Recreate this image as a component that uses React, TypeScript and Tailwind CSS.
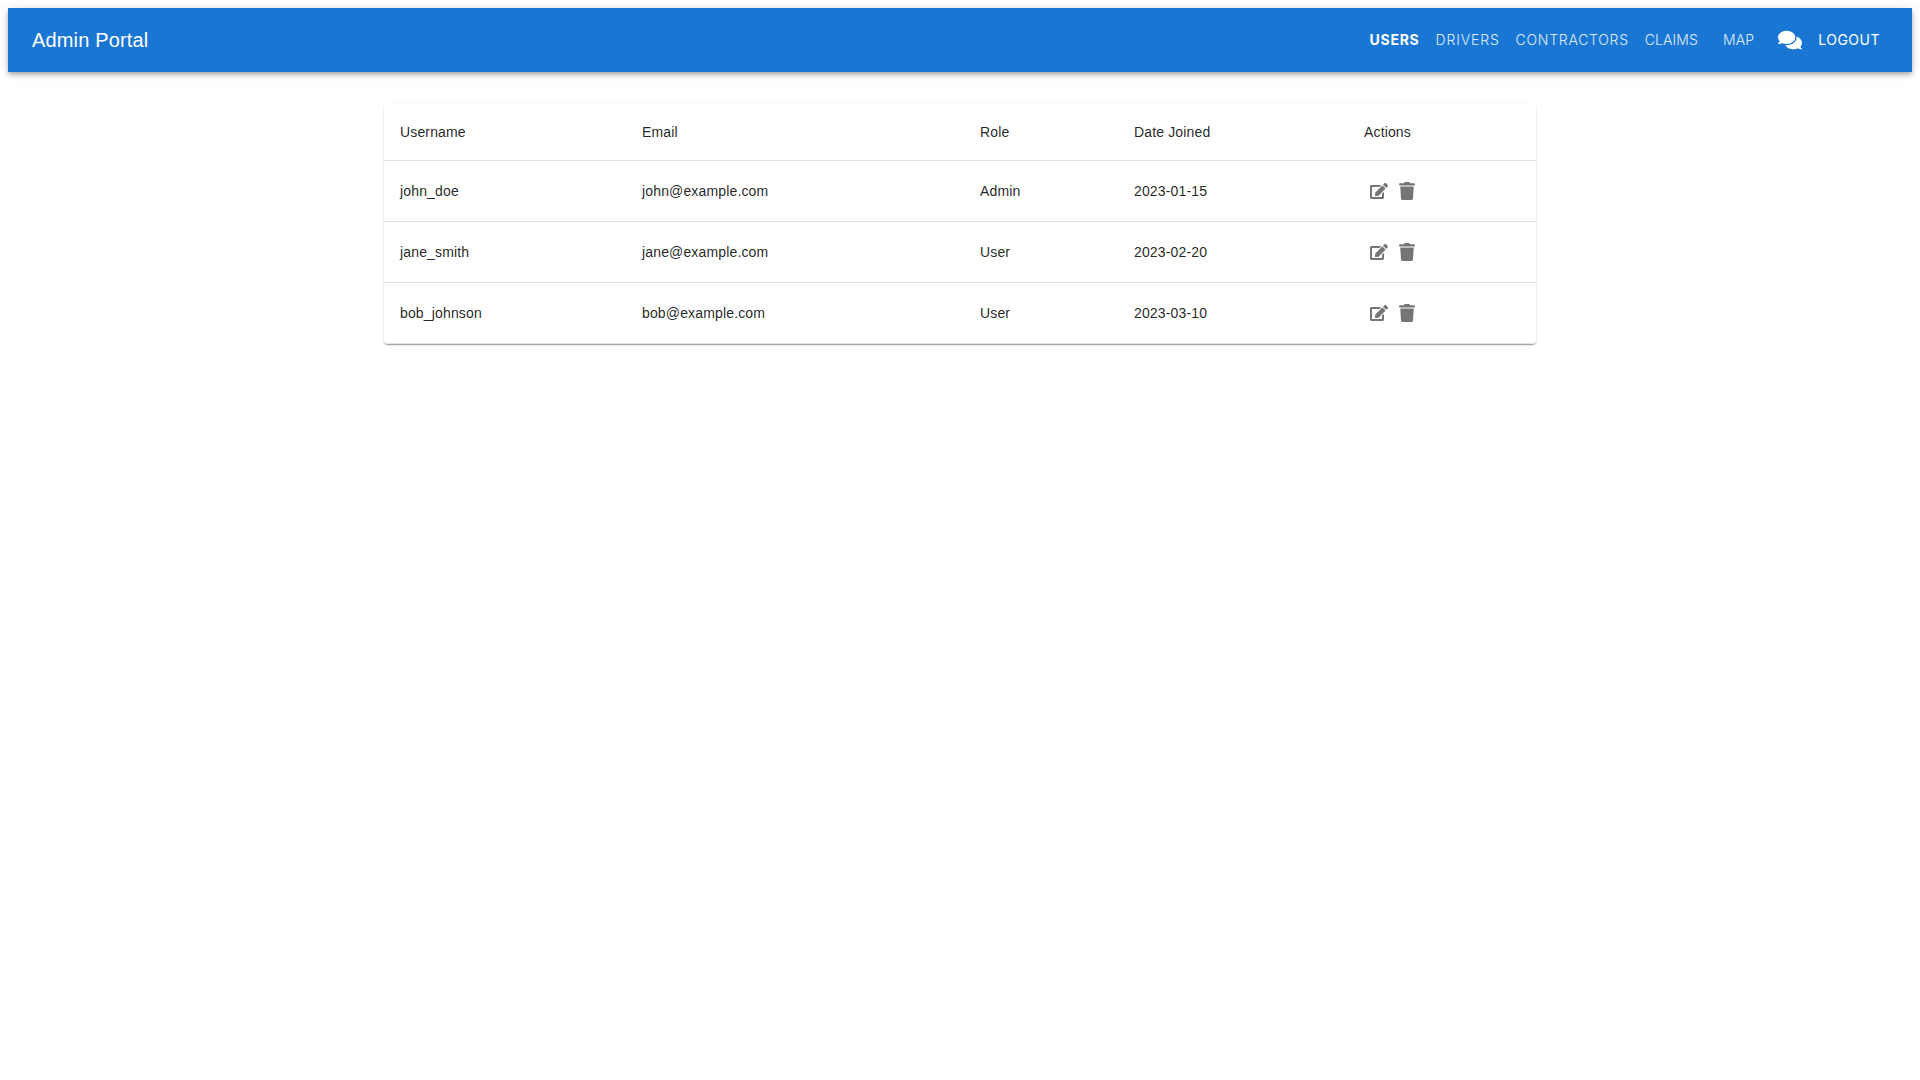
import { FaComments, FaEdit, FaTrash } from 'react-icons/fa';

const users = [
  { name: 'john_doe', email: 'john@example.com', role: 'Admin', joined: '2023-01-15' },
  { name: 'jane_smith', email: 'jane@example.com', role: 'User', joined: '2023-02-20' },
  { name: 'bob_johnson', email: 'bob@example.com', role: 'User', joined: '2023-03-10' },
];

export default function App() {
  return (
    <div className="min-h-screen bg-white p-2 font-['Liberation_Sans',sans-serif]">
      <header className="flex h-16 items-center justify-between bg-[#1976d2] pl-6 pr-8 text-white shadow-[0_2px_4px_-1px_rgba(0,0,0,0.2),0_4px_5px_0_rgba(0,0,0,0.14),0_1px_10px_0_rgba(0,0,0,0.12)]">
        <h1 className="text-xl tracking-[0.15px]">Admin Portal</h1>
        <nav className="flex items-center font-['Inter',sans-serif] text-sm tracking-[0.5px]">
          <a className="font-bold tracking-[0.75px]">USERS</a>
          <a className="ml-4 font-light tracking-[0.85px] text-white/85">DRIVERS</a>
          <a className="ml-4 font-light tracking-[0.72px] text-white/85">CONTRACTORS</a>
          <a className="ml-4 font-light tracking-[0.1px] text-white/85">CLAIMS</a>
          <a className="ml-[25px] font-light tracking-[0.1px] text-white/85">MAP</a>
          <FaComments className="ml-6 h-6 w-6" />
          <a className="ml-4">LOGOUT</a>
        </nav>
      </header>
      <div className="mx-auto mt-8 w-[1152px] overflow-hidden rounded bg-white shadow-[0_2px_1px_-1px_rgba(0,0,0,0.2),0_1px_1px_0_rgba(0,0,0,0.14),0_1px_3px_0_rgba(0,0,0,0.12)]">
        <table className="w-full table-fixed text-left text-sm tracking-[0.15px] text-[rgba(0,0,0,0.87)]">
          <thead>
            <tr className="h-[56px] border-b border-[#e0e0e0]">
              <th className="w-[242px] px-4 font-normal">Username</th>
              <th className="w-[338px] px-4 font-normal">Email</th>
              <th className="w-[154px] px-4 font-normal">Role</th>
              <th className="w-[230px] px-4 font-normal">Date Joined</th>
              <th className="px-4 font-normal">Actions</th>
            </tr>
          </thead>
          <tbody>
            {users.map((u) => (
              <tr key={u.name} className="h-[61px] border-b border-[#e0e0e0]">
                <td className="px-4">{u.name}</td>
                <td className="px-4">{u.email}</td>
                <td className="px-4">{u.role}</td>
                <td className="px-4">{u.joined}</td>
                <td className="px-4">
                  <div className="ml-[6px] flex items-center gap-[10px] text-[#757575]">
                    <FaEdit className="h-[18px] w-[18px]" />
                    <FaTrash className="h-[18px] w-[18px]" />
                  </div>
                </td>
              </tr>
            ))}
          </tbody>
        </table>
      </div>
    </div>
  );
}
